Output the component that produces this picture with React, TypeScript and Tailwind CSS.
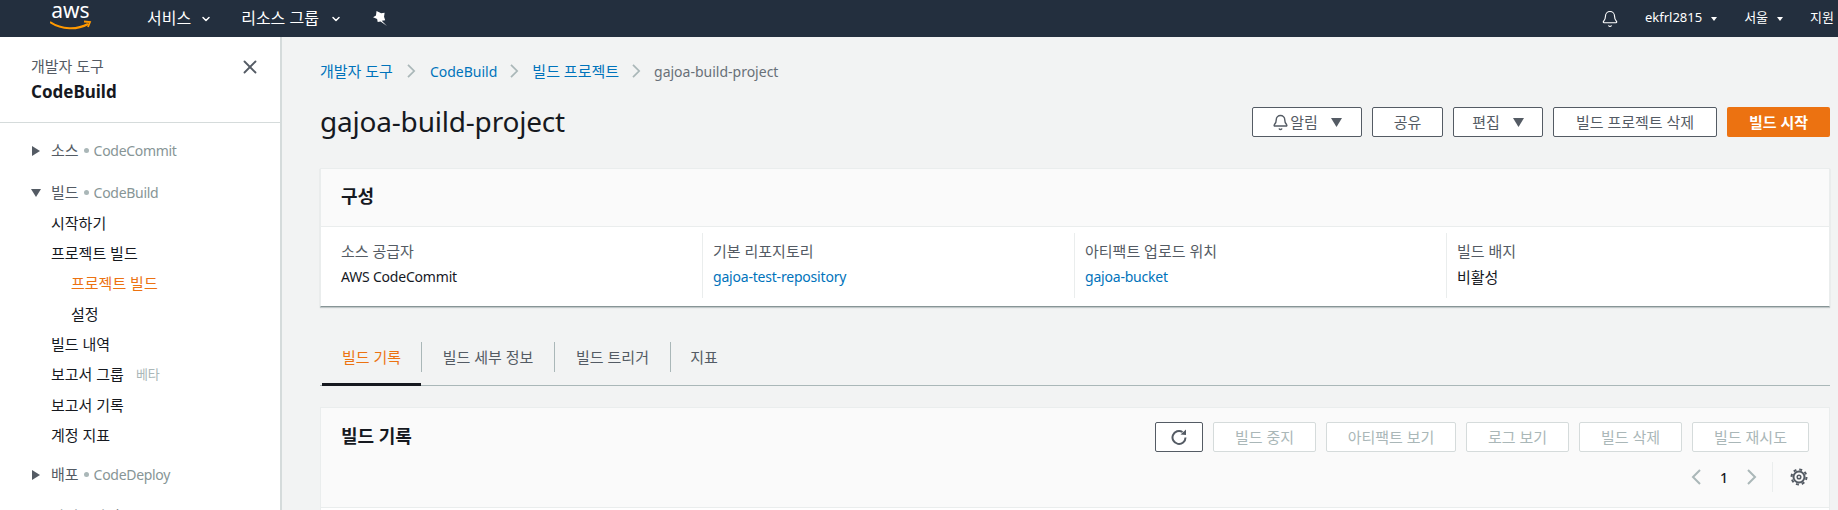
import { Bell, ChevronDown, X } from "lucide-react";

const font = "font-['Noto_Sans','Noto_Sans_CJK_KR',sans-serif]";

function Caret({ className }: { className: string }) {
  return (
    <svg viewBox="0 0 10 8" className={className} fill="currentColor" preserveAspectRatio="none">
      <path d="M0 0h10L5 8z" />
    </svg>
  );
}

function Chevron({ left, className }: { left?: boolean; className: string }) {
  return (
    <svg viewBox="0 0 10 16" className={className} fill="none" stroke="currentColor" strokeWidth="2">
      <path d={left ? "M9 1L2 8l7 7" : "M1 1l7 7-7 7"} />
    </svg>
  );
}

function SideGroup({ open, label, service, className }: { open?: boolean; label: string; service: string; className: string }) {
  return (
    <div className={`flex h-[30px] items-center ${open ? "pl-[31px]" : "pl-[32px]"} ${className}`}>
      {open ? (
        <svg viewBox="0 0 10 8" className="mr-[10px] h-[8px] w-[10px] shrink-0 translate-y-[1px] text-[#545b64]" fill="currentColor">
          <path d="M0 0h10L5 8z" />
        </svg>
      ) : (
        <svg viewBox="0 0 8 10" className="mr-[11px] h-[10px] w-[8px] shrink-0 translate-y-[1px] text-[#545b64]" fill="currentColor">
          <path d="M0 0l8 5-8 5z" />
        </svg>
      )}
      <span className="text-[15px] text-[#545b64]">{label}</span>
      <span className="mx-[5px] h-[5px] w-[5px] rounded-full bg-[#aab7b8]" />
      <span className="text-[14px] tracking-[-0.3px] text-[#879596]">{service}</span>
    </div>
  );
}

function SideLink({ label, indent, active, badge }: { label: string; indent?: boolean; active?: boolean; badge?: string }) {
  return (
    <div className={`flex h-[30.3px] items-center text-[15px] ${indent ? "pl-[71px]" : "pl-[51px]"} ${active ? "text-[#ec7211]" : "text-[#16191f]"}`}>
      {label}
      {badge && <span className="ml-[12px] text-[13px] text-[#aab7b8]">{badge}</span>}
    </div>
  );
}

function HeadButton({ label, width, caret }: { label: string; width: string; caret?: boolean }) {
  return (
    <button className={`flex h-[30px] items-center justify-center rounded-[2px] border border-[#545b64] bg-white text-[15px] text-[#545b64] ${width}`}>
      {label}
      {caret && <Caret className="ml-[13px] h-[9px] w-[11px]" />}
    </button>
  );
}

function OffButton({ label, width }: { label: string; width: string }) {
  return (
    <button className={`flex h-[30px] items-center justify-center rounded-[2px] border border-[#d5dbdb] bg-white text-[15px] text-[#aab7b8] ${width}`}>
      {label}
    </button>
  );
}

function ConfigCol({ label, value, link, korean, width, last }: { label: string; value: string; link?: boolean; korean?: boolean; width: string; last?: boolean }) {
  return (
    <div className={`flex h-[65px] flex-col pl-[10px] ${width} ${last ? "" : "border-r border-[#eaeded]"}`}>
      <div className="mt-[8px] text-[15px] leading-[20px] text-[#545b64]">{label}</div>
      <div className={`mt-[6px] leading-[20px] ${korean ? "text-[15px]" : "text-[14px] tracking-[-0.2px]"} ${link ? "text-[#0073bb]" : "text-[#16191f]"}`}>{value}</div>
    </div>
  );
}

function Tab({ label, active, width, last }: { label: string; active?: boolean; width: string; last?: boolean }) {
  return (
    <div className={`relative flex h-[30px] items-center justify-center text-[15px] ${width} ${last ? "" : "border-r border-[#aab7b8]"} ${active ? "text-[#ec7211]" : "text-[#545b64]"}`}>
      {label}
      {active && <div className="absolute left-0 right-0 top-[41px] h-[3px] bg-[#16191f]" />}
    </div>
  );
}

export default function App() {
  return (
    <div className={`flex h-[510px] w-[1838px] flex-col overflow-hidden bg-[#f2f3f3] ${font}`}>
      <header className="flex h-[37px] shrink-0 items-center bg-[#232f3e] text-white">
        <svg viewBox="0 0 42 30" className="ml-[50px] h-[30px] w-[42px]">
          <text x="20.500" y="14" textAnchor="middle" fontSize="21" fill="#fff" fontFamily="Noto Sans, sans-serif">aws</text>
          <path d="M0 18c12 8 27 8 38 2" fill="none" stroke="#f90" strokeWidth="2" />
          <path d="M34 17.500l6 .5-2 5" fill="none" stroke="#f90" strokeWidth="1.800" />
        </svg>
        <span className="ml-[55px] -translate-y-px text-[16px]">서비스</span>
        <ChevronDown className="ml-[9px] h-[12px] w-[12px]" strokeWidth={3} />
        <span className="ml-[29px] -translate-y-px text-[16px]">리소스 그룹</span>
        <ChevronDown className="ml-[11px] h-[12px] w-[12px]" strokeWidth={3} />
        <svg viewBox="0 0 12 13" className="ml-[31px] h-[15px] w-[14px]" fill="#fff">
          <path d="M3 0l4 2 3-.5-.5 3.500 1 3-3 .5L12 13 6.500 9 4 9.500 3.500 7 0 5.500 2.500 4z" />
        </svg>
        <div className="flex-1" />
        <Bell className="h-[18px] w-[18px]" strokeWidth={1.5} />
        <span className="ml-[26px] -translate-y-px text-[13px]">ekfrl2815</span>
        <Caret className="ml-[9px] h-[4px] w-[6px]" />
        <span className="ml-[27px] -translate-y-px text-[13px]">서울</span>
        <Caret className="ml-[9px] h-[4px] w-[6px]" />
        <span className="ml-[27px] mr-[4px] -translate-y-px text-[13px]">지원</span>
      </header>

      <div className="flex flex-1 overflow-hidden">
        <aside className="w-[282px] shrink-0 border-r-2 border-[#d5dbdb] bg-white">
          <div className="relative h-[86px] border-b border-[#d5dbdb] pl-[31px]">
            <div className="pt-[19px] text-[15px] leading-[20px] text-[#545b64]">개발자 도구</div>
            <div className="mt-[6px] text-[17px] font-bold leading-[20px] text-[#16191f]">CodeBuild</div>
            <X className="absolute left-[239px] top-[19px] h-[22px] w-[22px] text-[#545b64]" strokeWidth={2} />
          </div>
          <SideGroup label="소스" service="CodeCommit" className="mt-[12px]" />
          <SideGroup open label="빌드" service="CodeBuild" className="mt-[12px]" />
          <div className="mt-[1px]">
            <SideLink label="시작하기" />
            <SideLink label="프로젝트 빌드" />
            <SideLink label="프로젝트 빌드" indent active />
            <SideLink label="설정" indent />
            <SideLink label="빌드 내역" />
            <SideLink label="보고서 그룹" badge="베타" />
            <SideLink label="보고서 기록" />
            <SideLink label="계정 지표" />
          </div>
          <SideGroup label="배포" service="CodeDeploy" className="mt-[9px]" />
          <SideGroup label="파이프라인" service="CodePipeline" className="mt-[12px]" />
        </aside>

        <main className="min-w-0 flex-1 pl-[38px] pr-[8px]">
          <nav className="mt-[24px] flex h-[20px] items-center">
            <span className="text-[15px] text-[#0073bb]">개발자 도구</span>
            <Chevron className="mx-[14px] h-[14px] w-[9px] text-[#aab7b8]" />
            <span className="text-[14px] text-[#0073bb]">CodeBuild</span>
            <Chevron className="mx-[13px] h-[14px] w-[9px] text-[#aab7b8]" />
            <span className="text-[15px] text-[#0073bb]">빌드 프로젝트</span>
            <Chevron className="mx-[13px] h-[14px] w-[9px] text-[#aab7b8]" />
            <span className="text-[14px] text-[#687078]">gajoa-build-project</span>
          </nav>

          <div className="mt-[26px] flex h-[30px] items-center justify-between">
            <h1 className="pb-[2px] text-[28px] leading-[30px] tracking-[-0.2px] text-[#16191f]">gajoa-build-project</h1>
            <div className="flex gap-[10px]">
              <button className="flex h-[30px] w-[110px] items-center justify-center rounded-[2px] border border-[#545b64] bg-white text-[15px] text-[#545b64]">
                <Bell className="mr-[1px] h-[17px] w-[17px]" strokeWidth={2} />
                알림
                <Caret className="ml-[13px] h-[9px] w-[11px]" />
              </button>
              <HeadButton label="공유" width="w-[71px]" />
              <HeadButton label="편집" width="w-[90px]" caret />
              <HeadButton label="빌드 프로젝트 삭제" width="w-[164px]" />
              <button className="flex h-[30px] w-[103px] items-center justify-center rounded-[2px] bg-[#ec7211] text-[15px] font-bold text-white">빌드 시작</button>
            </div>
          </div>

          <section className="mt-[31px] h-[139px] border-x border-t border-b border-[#eaeded] border-b-[#879596] bg-white shadow-[0_1px_1px_rgba(0,28,36,0.2)]">
            <div className="flex h-[58px] items-center border-b border-[#eaeded] bg-[#fafafa] pb-[2px] pl-[20px] text-[18px] font-bold text-[#16191f]">구성</div>
            <div className="flex pl-[10px] pt-[6px]">
              <ConfigCol label="소스 공급자" value="AWS CodeCommit" width="w-[372px]" />
              <ConfigCol label="기본 리포지토리" value="gajoa-test-repository" link width="w-[372px]" />
              <ConfigCol label="아티팩트 업로드 위치" value="gajoa-bucket" link width="w-[372px]" />
              <ConfigCol label="빌드 배지" value="비활성" korean width="w-[360px]" last />
            </div>
          </section>

          <div className="mt-[35px] flex h-[44px] border-b border-[#aab7b8] pl-[2px]">
            <Tab label="빌드 기록" active width="w-[100px]" />
            <Tab label="빌드 세부 정보" width="w-[133px]" />
            <Tab label="빌드 트리거" width="w-[116px]" />
            <Tab label="지표" width="w-[66px]" last />
          </div>

          <section className="mt-[21px] h-[140px] border-x border-t border-[#eaeded] bg-white">
            <div className="relative h-[100px] border-b border-[#eaeded] bg-[#fafafa] pt-[14px] pr-[20px]">
              <div className="absolute left-[20px] top-[14px] text-[18px] font-bold leading-[28px] text-[#16191f]">빌드 기록</div>
              <div className="flex justify-end gap-[10px]">
                <button className="flex h-[30px] w-[48px] items-center justify-center rounded-[2px] border border-[#545b64] bg-white text-[#545b64]">
                  <svg viewBox="0 0 16 16" className="h-[16px] w-[16px]" fill="none" stroke="currentColor" strokeWidth="2">
                    <path d="M11.500 3A6.500 6.500 0 1 0 14.500 8.500" />
                    <path d="M9.500 5.500L15 6V.5z" fill="currentColor" stroke="none" />
                  </svg>
                </button>
                <OffButton label="빌드 중지" width="w-[103px]" />
                <OffButton label="아티팩트 보기" width="w-[130px]" />
                <OffButton label="로그 보기" width="w-[103px]" />
                <OffButton label="빌드 삭제" width="w-[103px]" />
                <OffButton label="빌드 재시도" width="w-[117px]" />
              </div>
              <div className="mt-[10px] flex h-[30px] items-center justify-end">
                <Chevron left className="h-[16px] w-[10px] text-[#aab7b8]" />
                <span className="mx-[19px] text-[14px] font-medium text-[#16191f]">1</span>
                <Chevron className="h-[16px] w-[10px] text-[#aab7b8]" />
                <div className="ml-[15px] h-[30px] w-px bg-[#eaeded]" />
                <svg viewBox="0 0 18 18" className="ml-[17px] mr-[1px] h-[18px] w-[18px] text-[#545b64]" fill="none" stroke="currentColor">
                  <circle cx="9" cy="9" r="5.500" strokeWidth="2" />
                  <circle cx="9" cy="9" r="7.500" strokeWidth="2" strokeDasharray="3 2.890" />
                  <circle cx="9" cy="9" r="1.800" strokeWidth="1.500" />
                </svg>
              </div>
            </div>
          </section>
        </main>
      </div>
    </div>
  );
}
